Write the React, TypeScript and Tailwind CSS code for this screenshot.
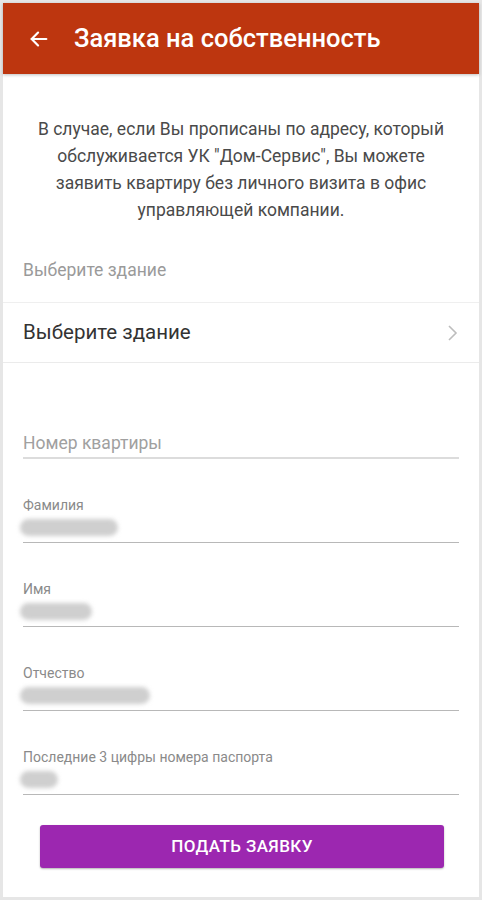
import React from "react";

const fields = [
  { label: "Фамилия", blur: 98 },
  { label: "Имя", blur: 72 },
  { label: "Отчество", blur: 130 },
  { label: "Последние 3 цифры номера паспорта", blur: 38 },
];

function Field({ label, blur }: { label: string; blur: number }) {
  return (
    <div className="mx-[20px] mt-[38px] border-b border-[#b8b8b8]">
      <div className="text-[14px] leading-[16px] text-[#8a8a8a]">{label}</div>
      <div className="h-[29px] flex items-center">
        <div
          className="h-[17px] -ml-[3px] rounded-full bg-[#cfcfcf] blur-[2px]"
          style={{ width: blur }}
        />
      </div>
    </div>
  );
}

export default function App() {
  return (
    <div
      className="w-[482px] h-[900px] bg-[#e6e6e6] p-[3px]"
      style={{ fontFamily: "Roboto, 'Noto Sans', sans-serif" }}
    >
      <div className="h-full bg-white flex flex-col">
        <header className="h-[71px] shrink-0 bg-[#bd360f] flex items-center pl-[25px] shadow-[0_1px_3px_rgba(0,0,0,0.25)]">
          <svg width="22" height="22" viewBox="0 0 24 24" fill="none" stroke="white" strokeWidth="2.4" strokeLinecap="round" strokeLinejoin="round">
            <path d="M20 12H4" />
            <path d="M11 5l-7 7 7 7" />
          </svg>
          <h1 className="ml-[24px] text-white text-[25.5px] font-medium">
            Заявка на собственность
          </h1>
        </header>

        <p className="mt-[42px] px-[28px] text-center text-[17.5px] leading-[27px] text-[#4a4a4a]">
          В случае, если Вы прописаны по адресу, который обслуживается УК "Дом-Сервис", Вы можете заявить квартиру без личного визита в офис управляющей компании.
        </p>

        <div className="mt-[36px] pl-[20px] pb-[22px] text-[17.5px] leading-[20px] text-[#9a9a9a] border-b border-[#efefef]">
          Выберите здание
        </div>

        <div className="h-[60px] shrink-0 flex items-center justify-between pl-[20px] pr-[20px] border-b border-[#ebebeb]">
          <span className="text-[20.5px] text-[#333]">Выберите здание</span>
          <svg width="14" height="18" viewBox="0 0 14 18" fill="none" stroke="#bdbdbd" strokeWidth="1.6">
            <path d="M4 2l7 7-7 7" />
          </svg>
        </div>

        <div className="mx-[20px] mt-[70px] pb-[4px] border-b-2 border-[#dcdcdc] text-[17.5px] leading-[20px] text-[#a0a0a0]">
          Номер квартиры
        </div>

        {fields.map((f) => (
          <Field key={f.label} label={f.label} blur={f.blur} />
        ))}

        <button className="mt-[30px] ml-[37px] mr-[35px] h-[43px] shrink-0 rounded-[3px] bg-[#9c27b0] text-white text-[17px] font-medium uppercase tracking-[0.4px] shadow-[0_1px_2px_rgba(0,0,0,0.3)]">
          Подать заявку
        </button>
      </div>
    </div>
  );
}
